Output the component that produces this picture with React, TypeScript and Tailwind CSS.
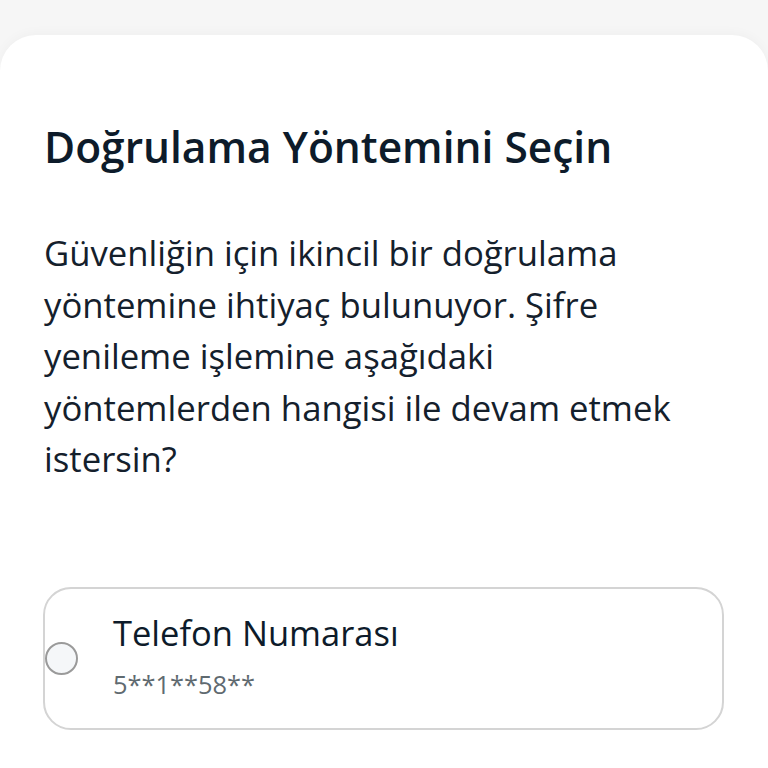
export default function App() {
  return (
    <div className="min-h-[768px] bg-[#f6f6f6] pt-[35px] font-['Open_Sans',sans-serif]">
      <div className="min-h-[733px] rounded-t-[36px] bg-white px-[44px] pt-[86px] pb-[40px] shadow-[0_-2px_12px_rgba(0,0,0,0.03)]">
        <h1 className="text-[42.5px] font-semibold leading-[52px] text-[#0d1b2a]">
          Doğrulama Yöntemini Seçin
        </h1>
        <p className="mt-[54px] max-w-[650px] text-[34.7px] leading-[51.5px] text-[#14202c]">
          Güvenliğin için ikincil bir doğrulama yöntemine ihtiyaç bulunuyor. Şifre yenileme işlemine aşağıdaki
          yöntemlerden hangisi ile devam etmek istersin?
        </p>
        <label className="mt-[102px] -ml-px flex h-[143px] cursor-pointer items-center rounded-[28px] border-2 border-[#d4d4d4] bg-white">
          <span className="h-[33px] w-[33px] shrink-0 rounded-full border-2 border-[#9a9a9a] bg-[#f5f7f9]" />
          <div className="mb-[4px] ml-[35px] flex flex-col">
            <span className="text-[34.5px] leading-[40px] text-[#0d1b2a]">Telefon Numarası</span>
            <span className="mt-[15px] text-[25.4px] leading-[32px] text-[#5f6a70]">5**1**58**</span>
          </div>
        </label>
      </div>
    </div>
  );
}
